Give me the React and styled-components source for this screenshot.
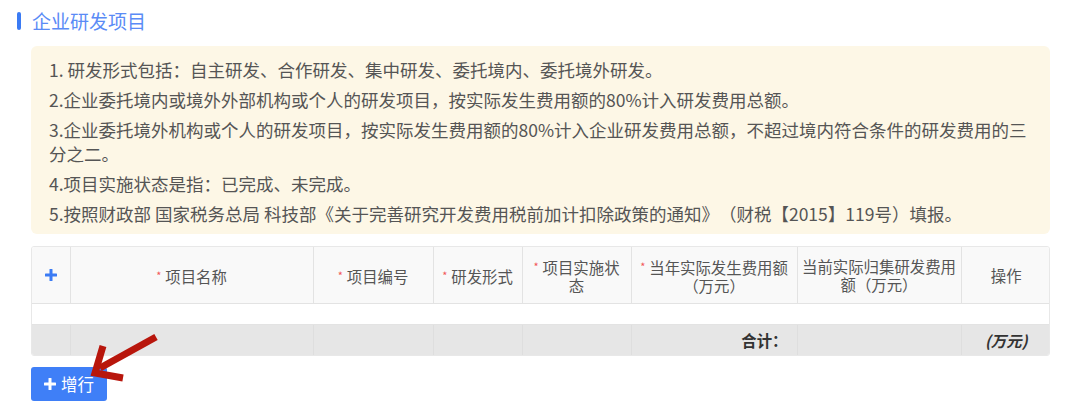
import React from "react";
import styled, { createGlobalStyle } from "styled-components";

const Global = createGlobalStyle`
  html, body { margin: 0; padding: 0; background: #fff; }
  body {
    font-family: "Noto Sans CJK SC", "Noto Sans", sans-serif;
    text-spacing-trim: space-all;
  }
`;

const Page = styled.div`
  position: relative;
  width: 1080px;
  height: 414px;
  box-sizing: border-box;
  padding: 9px 30px 0 17px;
`;

const TitleRow = styled.div`
  display: flex;
  align-items: center;
  gap: 11px;
  height: 24px;
`;

const TitleBar = styled.span`
  width: 4px;
  height: 18px;
  border-radius: 2px;
  background: #3b7bf4;
`;

const TitleText = styled.h2`
  margin: 0;
  font-size: 19px;
  font-weight: 400;
  line-height: 24px;
  color: #5a8bf6;
`;

const Body = styled.div`
  margin-left: 14px;
  padding-top: 13px;
`;

const Notice = styled.div`
  background: #fdf7e6;
  border-radius: 6px;
  padding: 12px 18px 2px 18px;
`;

const NoticeLine = styled.p`
  margin: 0 0 6px;
  font-size: 17.5px;
  line-height: 24px;
  color: #555;
`;

const TableWrap = styled.div`
  margin-top: 12px;
  border: 1px solid #e8e8e8;
  border-radius: 3px;
  overflow: hidden;
`;

const Table = styled.table`
  width: 100%;
  border-collapse: collapse;
  table-layout: fixed;
`;

const HeadCell = styled.th`
  height: 56px;
  padding: 0 4px;
  background: #f9f9f9;
  border: 1px solid #e3e3e3;
  border-top: none;
  font-size: 15.4px;
  font-weight: 400;
  line-height: 18px;
  color: #555;
  text-align: center;
  vertical-align: middle;
  &:first-child { border-left: none; }
  &:last-child { border-right: none; }
`;

const Req = styled.span`
  color: #f25656;
  font-size: 11px;
  margin-right: 4px;
  vertical-align: 3px;
`;

const EmptyCell = styled.td`
  height: 20px;
  padding: 0;
  background: #fff;
  border-bottom: 1px solid #e3e3e3;
`;

const TotalCell = styled.td`
  height: 30px;
  padding: 0 ${(p) => (p.$right ? "9px" : "5px")};
  background: #e6e6e6;
  border-left: 1px solid #dedede;
  border-right: 1px solid #dedede;
  font-size: 15.4px;
  font-weight: 700;
  font-style: ${(p) => (p.$italic ? "italic" : "normal")};
  color: #333;
  text-align: ${(p) => (p.$right ? "right" : "center")};
  &:first-child { border-left: none; }
  &:last-child { border-right: none; }
`;

const PlusIcon = ({ size = 12, color = "#3b7bf4" }) => (
  <svg width={size} height={size} viewBox="0 0 12 12" style={{ display: "block" }}>
    <rect x="4.5" y="0" width="3" height="12" rx="0.6" fill={color} />
    <rect x="0" y="4.5" width="12" height="3" rx="0.6" fill={color} />
  </svg>
);

const IconCenter = styled.div`
  display: flex;
  justify-content: center;
  align-items: center;
`;

const AddButton = styled.button`
  margin-top: 11px;
  display: inline-flex;
  align-items: center;
  gap: 5px;
  height: 34px;
  padding: 0 13px 0 13px;
  border: none;
  border-radius: 3px;
  background: #3f7ff7;
  color: #fff;
  font-family: inherit;
  font-size: 16.5px;
  cursor: pointer;
`;

const Arrow = styled.svg`
  position: absolute;
  left: 0;
  top: 0;
  pointer-events: none;
`;

const cols = [38, 243, 120, 89, 109, 166, 164, 90];

const notices = [
  "1. 研发形式包括：自主研发、合作研发、集中研发、委托境内、委托境外研发。",
  "2.企业委托境内或境外外部机构或个人的研发项目，按实际发生费用额的80%计入研发费用总额。",
  "3.企业委托境外机构或个人的研发项目，按实际发生费用额的80%计入企业研发费用总额，不超过境内符合条件的研发费用的三分之二。",
  "4.项目实施状态是指：已完成、未完成。",
  "5.按照财政部 国家税务总局 科技部《关于完善研究开发费用税前加计扣除政策的通知》（财税【2015】119号）填报。",
];

const headers = [
  { req: true, text: "项目名称" },
  { req: true, text: "项目编号" },
  { req: true, text: "研发形式" },
  { req: true, text: "项目实施状态" },
  { req: true, text: "当年实际发生费用额（万元）" },
  { req: false, text: "当前实际归集研发费用额（万元）" },
  { req: false, text: "操作" },
];

export default function App() {
  return (
    <>
      <Global />
      <Page>
        <TitleRow>
          <TitleBar />
          <TitleText>企业研发项目</TitleText>
        </TitleRow>
        <Body>
          <Notice>
            {notices.map((n) => (
              <NoticeLine key={n}>{n}</NoticeLine>
            ))}
          </Notice>
          <TableWrap>
            <Table>
              <colgroup>
                {cols.map((w, i) => (
                  <col key={i} style={{ width: w }} />
                ))}
              </colgroup>
              <thead>
                <tr>
                  <HeadCell>
                    <IconCenter>
                      <PlusIcon size={12} />
                    </IconCenter>
                  </HeadCell>
                  {headers.map((h) => (
                    <HeadCell key={h.text}>
                      {h.req && <Req>*</Req>}
                      {h.text}
                    </HeadCell>
                  ))}
                </tr>
              </thead>
              <tbody>
                <tr>
                  <EmptyCell colSpan={8} />
                </tr>
                <tr>
                  <TotalCell />
                  <TotalCell />
                  <TotalCell />
                  <TotalCell />
                  <TotalCell />
                  <TotalCell $right>合计：</TotalCell>
                  <TotalCell />
                  <TotalCell $italic>(万元)</TotalCell>
                </tr>
              </tbody>
            </Table>
          </TableWrap>
          <AddButton>
            <PlusIcon size={12} color="#fff" />
            增行
          </AddButton>
        </Body>
        <Arrow width="1080" height="414" viewBox="0 0 1080 414">
          <line x1="156" y1="337" x2="100" y2="368" stroke="#b8160c" strokeWidth="7" />
          <polyline
            points="103,346 95,373 123,378"
            fill="none"
            stroke="#b8160c"
            strokeWidth="7"
            strokeLinejoin="miter"
          />
        </Arrow>
      </Page>
    </>
  );
}
